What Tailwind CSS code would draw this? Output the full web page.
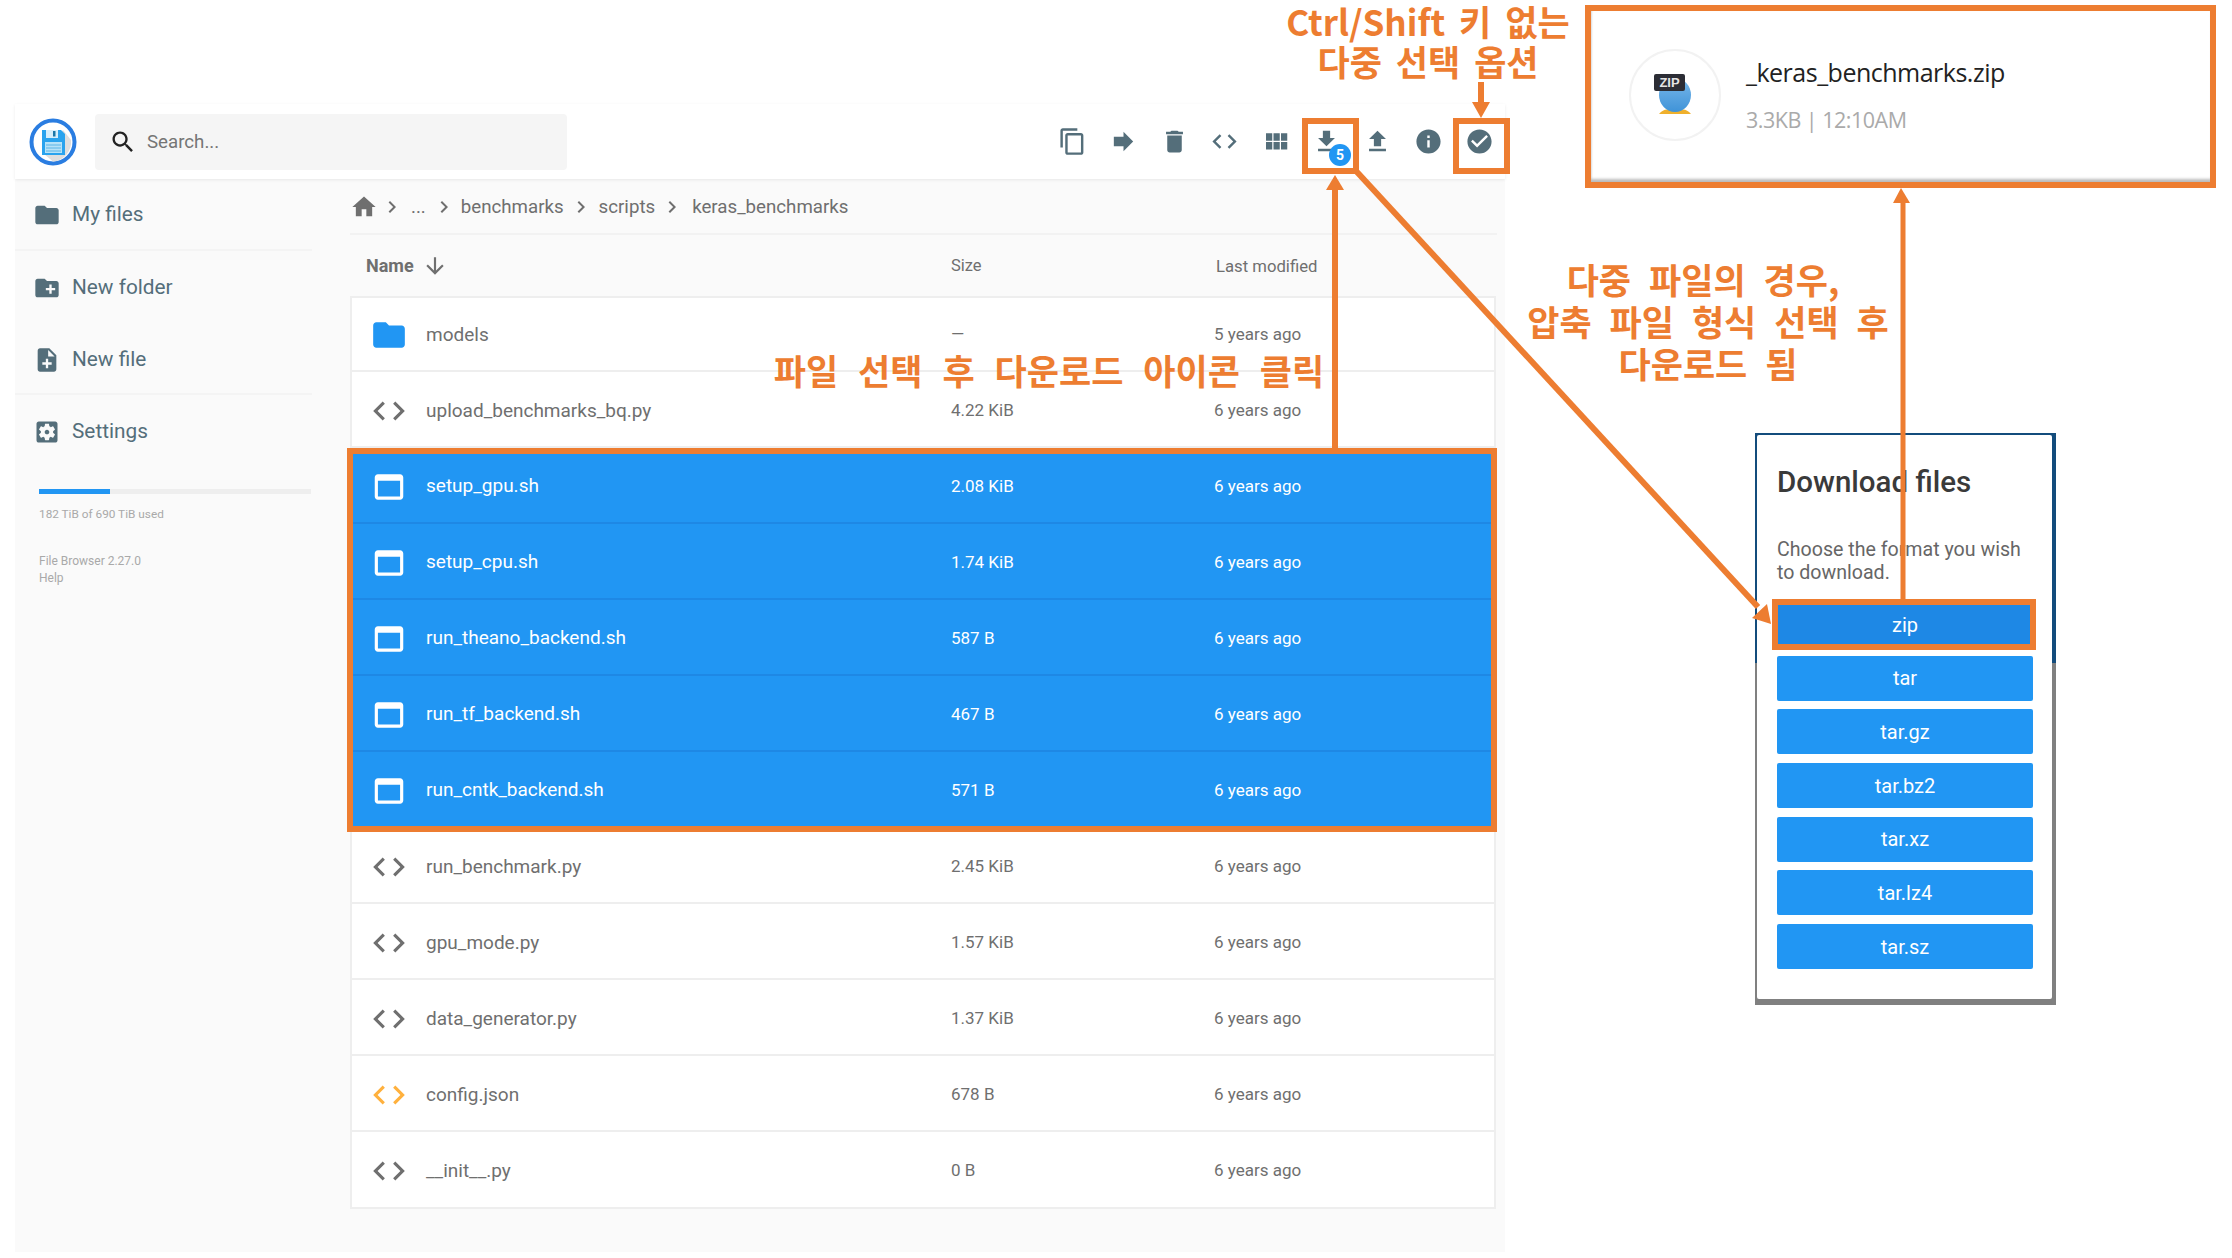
<!DOCTYPE html>
<html lang="en">
<head>
  <meta charset="UTF-8" />
  <title>File Browser</title>
  <script src="https://cdn.jsdelivr.net/npm/@tailwindcss/browser@4"></script>
</head>
<body class="bg-white font-['Roboto',sans-serif]">
  <div class="relative w-[2232px] h-[1258px] overflow-hidden">

    <!-- App -->
    <div class="ml-[15px] w-[1490px] pt-[104px]">
      <!-- Header -->
      <header class="relative z-10 flex items-center h-[75px] bg-white shadow-[0_1px_3px_rgba(0,0,0,0.08)]">
        <svg class="ml-[14px] w-[48px] h-[48px]" viewBox="0 0 48 48">
          <circle cx="24" cy="24" r="21.5" fill="#fff" stroke="#2a7de1" stroke-width="4" />
          <path d="M15 36 L34 12 L42 22 A19.5 19.5 0 0 1 24 43.5 Z" fill="#dedede" />
          <path d="M13 12 h19 l4 4 v21 h-23 z" fill="#29a3ee" />
          <rect x="17" y="12" width="12" height="8" fill="#d5eefb" />
          <rect x="24" y="13" width="2.5" height="5.5" fill="#1976a8" />
          <rect x="16" y="24" width="17" height="11" fill="#b5e2f8" />
          <path d="M17 27h15M17 30h15M17 33h15" stroke="#5ab4e6" stroke-width="1" />
        </svg>
        <div class="ml-[18px] flex items-center w-[472px] h-[56px] rounded bg-[#f5f5f5] pl-[14px]">
          <svg class="w-[28px] h-[28px] fill-[#222]" viewBox="0 0 24 24"><path d="M15.5 14h-.79l-.28-.27C15.41 12.59 16 11.11 16 9.5 16 5.91 13.09 3 9.5 3S3 5.91 3 9.5 5.91 16 9.5 16c1.61 0 3.09-.59 4.23-1.57l.27.28v.79l5 4.99L20.49 19l-4.99-5zm-6 0C7.01 14 5 11.99 5 9.5S7.01 5 9.5 5 14 7.01 14 9.5 11.99 14 9.5 14z"/></svg>
          <span class="ml-[10px] pt-[1px] text-[18.7px] text-[#757575]">Search...</span>
        </div>
        <div class="ml-auto flex items-center fill-[#546e7a]">
          <div class="flex justify-center w-[50.7px]"><svg class="w-[29px] h-[29px]" viewBox="0 0 24 24"><path d="M16 1H4c-1.1 0-2 .9-2 2v14h2V3h12V1zm3 4H8c-1.1 0-2 .9-2 2v14c0 1.1.9 2 2 2h11c1.1 0 2-.9 2-2V7c0-1.1-.9-2-2-2zm0 16H8V7h11v14z"/></svg></div>
          <div class="flex justify-center w-[50.7px]"><svg class="w-[29px] h-[29px]" viewBox="0 0 24 24"><path d="M12 8V4l8 8-8 8v-4H4V8z"/></svg></div>
          <div class="flex justify-center w-[50.7px]"><svg class="w-[29px] h-[29px]" viewBox="0 0 24 24"><path d="M6 19c0 1.1.9 2 2 2h8c1.1 0 2-.9 2-2V7H6v12zM19 4h-3.5l-1-1h-5l-1 1H5v2h14V4z"/></svg></div>
          <div class="flex justify-center w-[50.7px]"><svg class="w-[29px] h-[29px]" viewBox="0 0 24 24"><path d="M9.4 16.6L4.8 12l4.6-4.6L8 6l-6 6 6 6 1.4-1.4zm5.2 0l4.6-4.6-4.6-4.6L16 6l6 6-6 6-1.4-1.4z"/></svg></div>
          <div class="flex justify-center w-[50.7px]"><svg class="w-[30px] h-[30px]" viewBox="0 0 24 24"><path d="M4 11h5V5H4v6zm0 7h5v-6H4v6zm6 0h5v-6h-5v6zm6 0h5v-6h-5v6zm-6-7h5V5h-5v6zm6-6v6h5V5h-5z"/></svg></div>
          <div class="relative flex justify-center w-[51px]">
            <svg class="w-[29px] h-[29px]" viewBox="0 0 24 24"><path d="M19 9h-4V3H9v6H5l7 7 7-7zM5 18v2h14v-2H5z"/></svg>
            <span class="absolute left-[28px] top-[17px] flex items-center justify-center w-[22px] h-[22px] rounded-full bg-[#2196f3] text-white text-[14px] font-bold">5</span>
          </div>
          <div class="flex justify-center w-[51px]"><svg class="w-[29px] h-[29px]" viewBox="0 0 24 24"><path d="M9 16h6v-6h4l-7-7-7 7h4v6zm-4 2h14v2H5z"/></svg></div>
          <div class="flex justify-center w-[51px]"><svg class="w-[29px] h-[29px]" viewBox="0 0 24 24"><path d="M12 2C6.48 2 2 6.48 2 12s4.48 10 10 10 10-4.48 10-10S17.52 2 12 2zm1 15h-2v-6h2v6zm0-8h-2V7h2v2z"/></svg></div>
          <div class="flex justify-center w-[51px]"><svg class="w-[29px] h-[29px]" viewBox="0 0 24 24"><path d="M12 2C6.48 2 2 6.48 2 12s4.48 10 10 10 10-4.48 10-10S17.52 2 12 2zm-2 15l-5-5 1.41-1.41L10 14.17l7.59-7.59L19 8l-9 9z"/></svg></div>
        </div>
      </header>

      <!-- Body -->
      <div class="flex h-[1073px] bg-[#fafafa]">
        <!-- Sidebar -->
        <aside class="w-[297px] text-[20.8px] text-[#546e7a] fill-[#546e7a]">
          <div class="flex items-center h-[72px] pt-[2px] pl-[18px] border-b-2 border-[#f4f4f4]">
            <svg class="w-[28px] h-[28px]" viewBox="0 0 24 24"><path d="M10 4H4c-1.1 0-1.99.9-1.99 2L2 18c0 1.1.9 2 2 2h16c1.1 0 2-.9 2-2V8c0-1.1-.9-2-2-2h-8l-2-2z"/></svg>
            <span class="ml-[11px]">My files</span>
          </div>
          <div class="flex items-center h-[72px] pt-[2px] pl-[18px]">
            <svg class="w-[28px] h-[28px]" viewBox="0 0 24 24"><path d="M20 6h-8l-2-2H4c-1.11 0-1.99.89-1.99 2L2 18c0 1.11.89 2 2 2h16c1.11 0 2-.89 2-2V8c0-1.11-.89-2-2-2zm-1 8h-3v3h-2v-3h-3v-2h3V9h2v3h3v2z"/></svg>
            <span class="ml-[11px]">New folder</span>
          </div>
          <div class="flex items-center h-[72px] pt-[3px] pl-[18px] border-b-2 border-[#f4f4f4]">
            <svg class="w-[28px] h-[28px]" viewBox="0 0 24 24"><path d="M14 2H6c-1.1 0-1.99.9-1.99 2L4 20c0 1.1.89 2 1.99 2H18c1.1 0 2-.9 2-2V8l-6-6zm2 14h-3v3h-2v-3H8v-2h3v-3h2v3h3v2zm-3-7V3.5L18.5 9H13z"/></svg>
            <span class="ml-[11px]">New file</span>
          </div>
          <div class="flex items-center h-[72px] pt-[2px] pl-[18px]">
            <svg class="w-[28px] h-[28px]" viewBox="0 0 24 24"><path d="M12 10c-1.1 0-2 .9-2 2s.9 2 2 2 2-.9 2-2-.9-2-2-2zm7-7H5c-1.11 0-2 .9-2 2v14c0 1.1.89 2 2 2h14c1.11 0 2-.9 2-2V5c0-1.1-.89-2-2-2zm-1.75 9c0 .23-.02.46-.05.68l1.48 1.16c.13.11.17.3.08.45l-1.4 2.42c-.09.15-.27.21-.43.15l-1.74-.7c-.36.28-.76.51-1.18.69l-.26 1.85c-.03.17-.18.3-.35.3h-2.8c-.17 0-.32-.13-.35-.29l-.26-1.85c-.43-.18-.82-.41-1.18-.69l-1.74.7c-.16.06-.34 0-.43-.15l-1.4-2.42c-.09-.15-.05-.34.08-.45l1.48-1.16c-.03-.23-.05-.46-.05-.69 0-.23.02-.46.05-.68l-1.48-1.16c-.13-.11-.17-.3-.08-.45l1.4-2.42c.09-.15.27-.21.43-.15l1.74.7c.36-.28.76-.51 1.18-.69l.26-1.85c.03-.17.18-.3.35-.3h2.8c.17 0 .32.13.35.29l.26 1.85c.43.18.82.41 1.18.69l1.74-.7c.16-.06.34 0 .43.15l1.4 2.42c.09.15.05.34-.08.45l-1.48 1.16c.03.23.05.46.05.69z"/></svg>
            <span class="ml-[11px]">Settings</span>
          </div>
          <div class="ml-[24px] mt-[22px] w-[272px] h-[5px] bg-[#eeeeee]"><div class="w-[71px] h-[5px] bg-[#2196f3]"></div></div>
          <p class="ml-[24px] mt-[11px] text-[11.8px] leading-[18px] text-[#a9a9a9]">182 TiB of 690 TiB used</p>
          <p class="ml-[24px] mt-[30px] text-[12px] leading-[17px] text-[#a9a9a9]">File Browser 2.27.0<br />Help</p>
        </aside>

        <!-- File listing -->
        <main class="w-[1193px] pl-[38px]">
          <div class="flex items-center h-[56px] pt-[2px] mr-[8px] border-b-2 border-[#f2f2f2] text-[18.7px] text-[#6f6f6f] fill-[#6f6f6f]">
            <svg class="w-[28px] h-[28px]" viewBox="0 0 24 24"><path d="M10 20v-6h4v6h5v-8h3L12 3 2 12h3v8z"/></svg>
            <svg class="w-[24px] h-[24px] ml-[2px]" viewBox="0 0 24 24"><path d="M10 6L8.59 7.41 13.17 12l-4.58 4.59L10 18l6-6z"/></svg>
            <span class="ml-[7px]">...</span>
            <svg class="w-[24px] h-[24px] ml-[6px]" viewBox="0 0 24 24"><path d="M10 6L8.59 7.41 13.17 12l-4.58 4.59L10 18l6-6z"/></svg>
            <span class="ml-[5px]">benchmarks</span>
            <svg class="w-[24px] h-[24px] ml-[5px]" viewBox="0 0 24 24"><path d="M10 6L8.59 7.41 13.17 12l-4.58 4.59L10 18l6-6z"/></svg>
            <span class="ml-[6px]">scripts</span>
            <svg class="w-[24px] h-[24px] ml-[5px]" viewBox="0 0 24 24"><path d="M10 6L8.59 7.41 13.17 12l-4.58 4.59L10 18l6-6z"/></svg>
            <span class="ml-[8px]">keras_benchmarks</span>
          </div>
          <div class="flex items-center h-[61px] pl-[16px] text-[#6f6f6f]">
            <div class="flex items-center w-[585px] text-[18px] font-bold fill-[#6f6f6f]">Name
              <svg class="ml-[8px] w-[26px] h-[26px]" viewBox="0 0 24 24"><path d="M20 12l-1.41-1.41L13 16.17V4h-2v12.17l-5.58-5.59L4 12l8 8 8-8z"/></svg>
            </div>
            <div class="w-[265px] pt-[2px] text-[16.5px]">Size</div>
            <div class="pt-[2px] text-[16.7px]">Last modified</div>
          </div>

          <div class="w-[1146px] border-2 border-[#eeeeee] bg-white text-[19px] text-[#6f6f6f] fill-[#6f6f6f]">
            <div class="flex items-center h-[74px] pt-[2px] border-b-2 border-[#eeeeee]">
              <svg class="ml-[18px] w-[38px] h-[38px] fill-[#2196f3]" viewBox="0 0 24 24"><path d="M10 4H4c-1.1 0-1.99.9-1.99 2L2 18c0 1.1.9 2 2 2h16c1.1 0 2-.9 2-2V8c0-1.1-.9-2-2-2h-8l-2-2z"/></svg>
              <span class="ml-[18px] w-[525px]">models</span><span class="w-[263px] text-[17px]">—</span><span class="text-[17px]">5 years ago</span>
            </div>
            <div class="flex items-center h-[76px] pt-[4px] border-b-2 border-[#eeeeee]">
              <svg class="ml-[18px] w-[38px] h-[38px]" viewBox="0 0 24 24"><path d="M9.4 16.6L4.8 12l4.6-4.6L8 6l-6 6 6 6 1.4-1.4zm5.2 0l4.6-4.6-4.6-4.6L16 6l6 6-6 6-1.4-1.4z"/></svg>
              <span class="ml-[18px] w-[525px]">upload_benchmarks_bq.py</span><span class="w-[263px] text-[17px]">4.22 KiB</span><span class="text-[17px]">6 years ago</span>
            </div>
            <div class="flex items-center h-[76px] pt-[3px] border-b-2 border-[#1e88e5] bg-[#2196f3] text-white fill-white">
              <svg class="ml-[18px] w-[38px] h-[38px]" viewBox="0 0 24 24"><path d="M19 4H5c-1.11 0-2 .9-2 2v12c0 1.1.89 2 2 2h14c1.1 0 2-.9 2-2V6c0-1.1-.89-2-2-2zm0 14H5V8h14v10z"/></svg>
              <span class="ml-[18px] w-[525px]">setup_gpu.sh</span><span class="w-[263px] text-[17px]">2.08 KiB</span><span class="text-[17px]">6 years ago</span>
            </div>
            <div class="flex items-center h-[76px] pt-[3px] border-b-2 border-[#1e88e5] bg-[#2196f3] text-white fill-white">
              <svg class="ml-[18px] w-[38px] h-[38px]" viewBox="0 0 24 24"><path d="M19 4H5c-1.11 0-2 .9-2 2v12c0 1.1.89 2 2 2h14c1.1 0 2-.9 2-2V6c0-1.1-.89-2-2-2zm0 14H5V8h14v10z"/></svg>
              <span class="ml-[18px] w-[525px]">setup_cpu.sh</span><span class="w-[263px] text-[17px]">1.74 KiB</span><span class="text-[17px]">6 years ago</span>
            </div>
            <div class="flex items-center h-[76px] pt-[3px] border-b-2 border-[#1e88e5] bg-[#2196f3] text-white fill-white">
              <svg class="ml-[18px] w-[38px] h-[38px]" viewBox="0 0 24 24"><path d="M19 4H5c-1.11 0-2 .9-2 2v12c0 1.1.89 2 2 2h14c1.1 0 2-.9 2-2V6c0-1.1-.89-2-2-2zm0 14H5V8h14v10z"/></svg>
              <span class="ml-[18px] w-[525px]">run_theano_backend.sh</span><span class="w-[263px] text-[17px]">587 B</span><span class="text-[17px]">6 years ago</span>
            </div>
            <div class="flex items-center h-[76px] pt-[3px] border-b-2 border-[#1e88e5] bg-[#2196f3] text-white fill-white">
              <svg class="ml-[18px] w-[38px] h-[38px]" viewBox="0 0 24 24"><path d="M19 4H5c-1.11 0-2 .9-2 2v12c0 1.1.89 2 2 2h14c1.1 0 2-.9 2-2V6c0-1.1-.89-2-2-2zm0 14H5V8h14v10z"/></svg>
              <span class="ml-[18px] w-[525px]">run_tf_backend.sh</span><span class="w-[263px] text-[17px]">467 B</span><span class="text-[17px]">6 years ago</span>
            </div>
            <div class="flex items-center h-[76px] pt-[3px] border-b-2 border-[#2196f3] bg-[#2196f3] text-white fill-white">
              <svg class="ml-[18px] w-[38px] h-[38px]" viewBox="0 0 24 24"><path d="M19 4H5c-1.11 0-2 .9-2 2v12c0 1.1.89 2 2 2h14c1.1 0 2-.9 2-2V6c0-1.1-.89-2-2-2zm0 14H5V8h14v10z"/></svg>
              <span class="ml-[18px] w-[525px]">run_cntk_backend.sh</span><span class="w-[263px] text-[17px]">571 B</span><span class="text-[17px]">6 years ago</span>
            </div>
            <div class="flex items-center h-[76px] pt-[4px] border-b-2 border-[#eeeeee]">
              <svg class="ml-[18px] w-[38px] h-[38px]" viewBox="0 0 24 24"><path d="M9.4 16.6L4.8 12l4.6-4.6L8 6l-6 6 6 6 1.4-1.4zm5.2 0l4.6-4.6-4.6-4.6L16 6l6 6-6 6-1.4-1.4z"/></svg>
              <span class="ml-[18px] w-[525px]">run_benchmark.py</span><span class="w-[263px] text-[17px]">2.45 KiB</span><span class="text-[17px]">6 years ago</span>
            </div>
            <div class="flex items-center h-[76px] pt-[4px] border-b-2 border-[#eeeeee]">
              <svg class="ml-[18px] w-[38px] h-[38px]" viewBox="0 0 24 24"><path d="M9.4 16.6L4.8 12l4.6-4.6L8 6l-6 6 6 6 1.4-1.4zm5.2 0l4.6-4.6-4.6-4.6L16 6l6 6-6 6-1.4-1.4z"/></svg>
              <span class="ml-[18px] w-[525px]">gpu_mode.py</span><span class="w-[263px] text-[17px]">1.57 KiB</span><span class="text-[17px]">6 years ago</span>
            </div>
            <div class="flex items-center h-[76px] pt-[4px] border-b-2 border-[#eeeeee]">
              <svg class="ml-[18px] w-[38px] h-[38px]" viewBox="0 0 24 24"><path d="M9.4 16.6L4.8 12l4.6-4.6L8 6l-6 6 6 6 1.4-1.4zm5.2 0l4.6-4.6-4.6-4.6L16 6l6 6-6 6-1.4-1.4z"/></svg>
              <span class="ml-[18px] w-[525px]">data_generator.py</span><span class="w-[263px] text-[17px]">1.37 KiB</span><span class="text-[17px]">6 years ago</span>
            </div>
            <div class="flex items-center h-[76px] pt-[4px] border-b-2 border-[#eeeeee]">
              <svg class="ml-[18px] w-[38px] h-[38px] fill-[#ffb13d]" viewBox="0 0 24 24"><path d="M9.4 16.6L4.8 12l4.6-4.6L8 6l-6 6 6 6 1.4-1.4zm5.2 0l4.6-4.6-4.6-4.6L16 6l6 6-6 6-1.4-1.4z"/></svg>
              <span class="ml-[18px] w-[525px]">config.json</span><span class="w-[263px] text-[17px]">678 B</span><span class="text-[17px]">6 years ago</span>
            </div>
            <div class="flex items-center h-[75px] pt-[3px]">
              <svg class="ml-[18px] w-[38px] h-[38px]" viewBox="0 0 24 24"><path d="M9.4 16.6L4.8 12l4.6-4.6L8 6l-6 6 6 6 1.4-1.4zm5.2 0l4.6-4.6-4.6-4.6L16 6l6 6-6 6-1.4-1.4z"/></svg>
              <span class="ml-[18px] w-[525px]">__init__.py</span><span class="w-[263px] text-[17px]">0 B</span><span class="text-[17px]">6 years ago</span>
            </div>
          </div>
        </main>
      </div>
    </div>

    <!-- Download toast inset -->
    <div class="absolute left-[1585px] top-[5px] z-20 flex items-center w-[631px] h-[183px] pb-[4px] border-[6px] border-[#ed7d31] bg-white shadow-[inset_0_-5px_3px_-2px_#bbbbbb,inset_2px_0_2px_-1px_#dddddd]">
      <div class="ml-[38px] flex items-center justify-center w-[92px] h-[92px] rounded-full border-2 border-[#f2f2f2]">
        <svg class="w-[42px] h-[41px]" viewBox="0 0 42 41">
          <defs>
            <linearGradient id="zipBody" x1="0" y1="0" x2="0" y2="1">
              <stop offset="0" stop-color="#7ab8ea" />
              <stop offset="1" stop-color="#3f93d8" />
            </linearGradient>
          </defs>
          <path d="M5 40 Q10 34 16 36 L26 36 Q32 34 37 40 Z" fill="#efb02c" />
          <ellipse cx="21" cy="21" rx="16" ry="17" fill="url(#zipBody)" />
          <rect x="0" y="0" width="31" height="17" rx="2" fill="#2c2d35" />
          <text x="15.5" y="13" text-anchor="middle" font-family="Liberation Sans" font-size="13" font-weight="700" fill="#e4e4e4">ZIP</text>
        </svg>
      </div>
      <div class="ml-[25px] font-['Open_Sans',sans-serif]">
        <p class="-mt-[1px] text-[25px] leading-[34px] text-[#222] tracking-[-0.5px]">_keras_benchmarks.zip</p>
        <p class="mt-[17px] text-[21.5px] leading-[28px] text-[#aaaaaa] tracking-[-0.5px]">3.3KB | 12:10AM</p>
      </div>
    </div>

    <!-- Download files dialog inset -->
    <div class="absolute left-[1755px] top-[433px] z-10 w-[301px] h-[572px] bg-[linear-gradient(#134c7c_0,#134c7c_230px,#808080_230px)] pl-[2px] pr-[4px] pt-[2px] pb-[6px]">
      <div class="h-full bg-white rounded-[2px] pl-[20px] pr-[19px] text-[#3a3a3a]">
        <h2 class="pt-[28px] text-[29.5px] leading-[38px] font-medium">Download files</h2>
        <p class="mt-[37px] text-[19.6px] leading-[23px] text-[#666]">Choose the format you wish to download.</p>
        <div class="mt-[18px] flex flex-col gap-[8.7px] text-[20px] text-white">
          <div class="flex items-center justify-center h-[45px] bg-[#1e88e5]">zip</div>
          <div class="flex items-center justify-center h-[45px] rounded-[2px] bg-[#2196f3]">tar</div>
          <div class="flex items-center justify-center h-[45px] rounded-[2px] bg-[#2196f3]">tar.gz</div>
          <div class="flex items-center justify-center h-[45px] rounded-[2px] bg-[#2196f3]">tar.bz2</div>
          <div class="flex items-center justify-center h-[45px] rounded-[2px] bg-[#2196f3]">tar.xz</div>
          <div class="flex items-center justify-center h-[45px] rounded-[2px] bg-[#2196f3]">tar.lz4</div>
          <div class="flex items-center justify-center h-[45px] rounded-[2px] bg-[#2196f3]">tar.sz</div>
        </div>
      </div>
    </div>

    <!-- Annotation boxes -->
    <div class="absolute z-30 left-[347px] top-[448px] w-[1150px] h-[384px] border-[6px] border-[#ed7d31]"></div>
    <div class="absolute z-30 left-[1302px] top-[118px] w-[57px] h-[56px] border-[6px] border-[#ed7d31]"></div>
    <div class="absolute z-30 left-[1453px] top-[118px] w-[57px] h-[56px] border-[6px] border-[#ed7d31]"></div>
    <div class="absolute z-30 left-[1772px] top-[599px] w-[264px] h-[51px] border-[6px] border-[#ed7d31]"></div>

    <!-- Annotation arrows -->
    <svg class="absolute z-30 left-0 top-0 w-[2232px] h-[1258px]" viewBox="0 0 2232 1258" fill="none">
      <path d="M1481 82V104" stroke="#ed7d31" stroke-width="6" />
      <path d="M1481 118L1472 102H1490Z" fill="#ed7d31" />
      <path d="M1335 448V188" stroke="#ed7d31" stroke-width="6" />
      <path d="M1335 175L1326 190H1344Z" fill="#ed7d31" />
      <path d="M1357 172L1758 607" stroke="#ed7d31" stroke-width="6" />
      <path d="M1771 624L1752 618L1767 604Z" fill="#ed7d31" />
      <path d="M1903 599V200" stroke="#ed7d31" stroke-width="5" />
      <path d="M1901 188L1893 203H1910Z" fill="#ed7d31" />
    </svg>

    <!-- Annotation labels -->
    <div class="absolute z-40 left-[1228px] top-[1px] w-[400px] text-center font-['Noto_Sans_CJK_KR',sans-serif] font-bold text-[35px] leading-[40px] [word-spacing:6px] text-[#ed7d31]">Ctrl/Shift 키 없는<br />다중 선택 옵션</div>
    <div class="absolute z-40 left-[749px] top-[346px] w-[600px] text-center font-['Noto_Sans_CJK_KR',sans-serif] font-bold text-[35px] leading-[48px] [word-spacing:12px] text-[#ed7d31]">파일 선택 후 다운로드 아이콘 클릭</div>
    <div class="absolute z-40 left-[1458px] top-[258px] w-[500px] text-center font-['Noto_Sans_CJK_KR',sans-serif] font-bold text-[35px] leading-[42px] [word-spacing:10px] text-[#ed7d31]"><span class="mr-[10px]">다중 파일의 경우,</span><br />압축 파일 형식 선택 후<br />다운로드 됨</div>
  </div>
</body>
</html>
